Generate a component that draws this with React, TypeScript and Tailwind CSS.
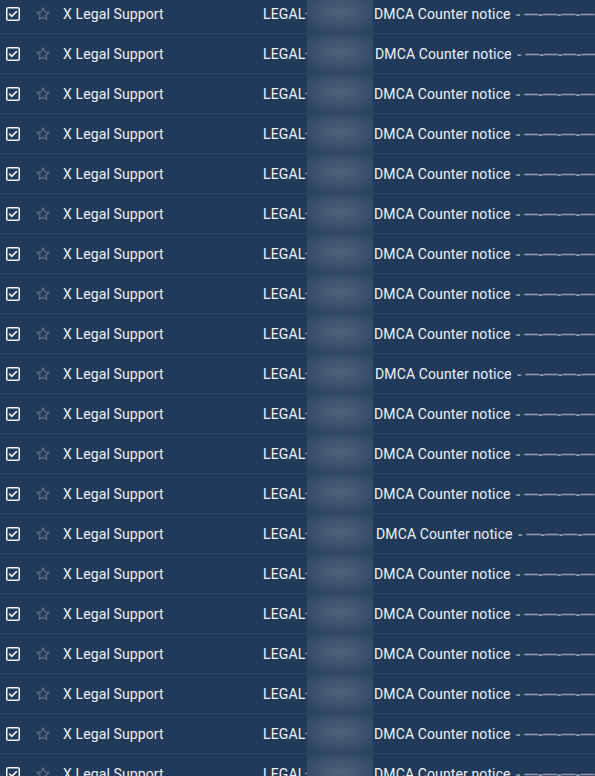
import React from 'react';

// small per-row offsets of the subject text, as in the mail list
const offsets = [0, 1, 0, 0, 0, 0, 0, 0, 0, 1, 0, 0, 0, 2, 0, 0, 0, 0, 0, 0];

const CheckIcon = () => (
  <svg width="14" height="14" viewBox="0 0 14 14" className="shrink-0">
    <rect x="0.75" y="0.75" width="12.5" height="12.5" rx="1.5" fill="none" stroke="#f1f4f8" strokeWidth="1.5" />
    <path d="M3.6 7.2 L5.9 9.3 L10.4 4.6" fill="none" stroke="#f1f4f8" strokeWidth="1.6" strokeLinecap="round" strokeLinejoin="round" />
  </svg>
);

const StarIcon = () => (
  <svg width="16" height="16" viewBox="0 0 24 24" className="shrink-0">
    <path
      d="M12 2.8l2.75 5.9 6.45.75-4.8 4.4 1.3 6.35L12 17l-5.7 3.2 1.3-6.35-4.8-4.4 6.45-.75z"
      fill="none"
      stroke="#5d718a"
      strokeWidth="1.8"
      strokeLinejoin="round"
    />
  </svg>
);

const Row: React.FC<{ shift: number }> = ({ shift }) => (
  <div className="flex h-[40px] items-center overflow-hidden border-b border-[#2c4665] pt-[1px] text-[14px] tracking-[0.12px] text-[#eef2f6]">
    <div className="flex w-[20px] shrink-0 pl-[6px]">
      <CheckIcon />
    </div>
    <div className="ml-[15px] flex w-[16px] shrink-0 justify-center">
      <StarIcon />
    </div>
    <div className="ml-[12px] w-[200px] shrink-0 whitespace-nowrap">X Legal Support</div>
    <div className="w-[41px] shrink-0 whitespace-nowrap">LEGAL</div>
    <div className="w-[3px] shrink-0 text-[#a9b7c6]">·</div>
    <div className="-mt-[1px] h-[40px] w-[66px] shrink-0 bg-[radial-gradient(ellipse_46px_24px_at_50%_45%,#4d637b,#2c4563)]" />
    <div className="flex shrink-0 whitespace-nowrap" style={{ paddingLeft: 1 + shift }}>
      <span>DMCA Counter notice</span>
      <span className="ml-[5px] font-['Liberation_Sans',sans-serif] font-bold tracking-[0px] text-[#8f9cad]">- —-—-—-—-—</span>
    </div>
  </div>
);

export default function App() {
  return (
    <div
      className="h-[776px] w-[595px] overflow-hidden bg-[#213a59]"
      style={{ fontFamily: 'Roboto, "Liberation Sans", sans-serif' }}
    >
      <div className="-mt-[6px]">
        {offsets.map((s, i) => (
          <Row key={i} shift={s} />
        ))}
      </div>
    </div>
  );
}
